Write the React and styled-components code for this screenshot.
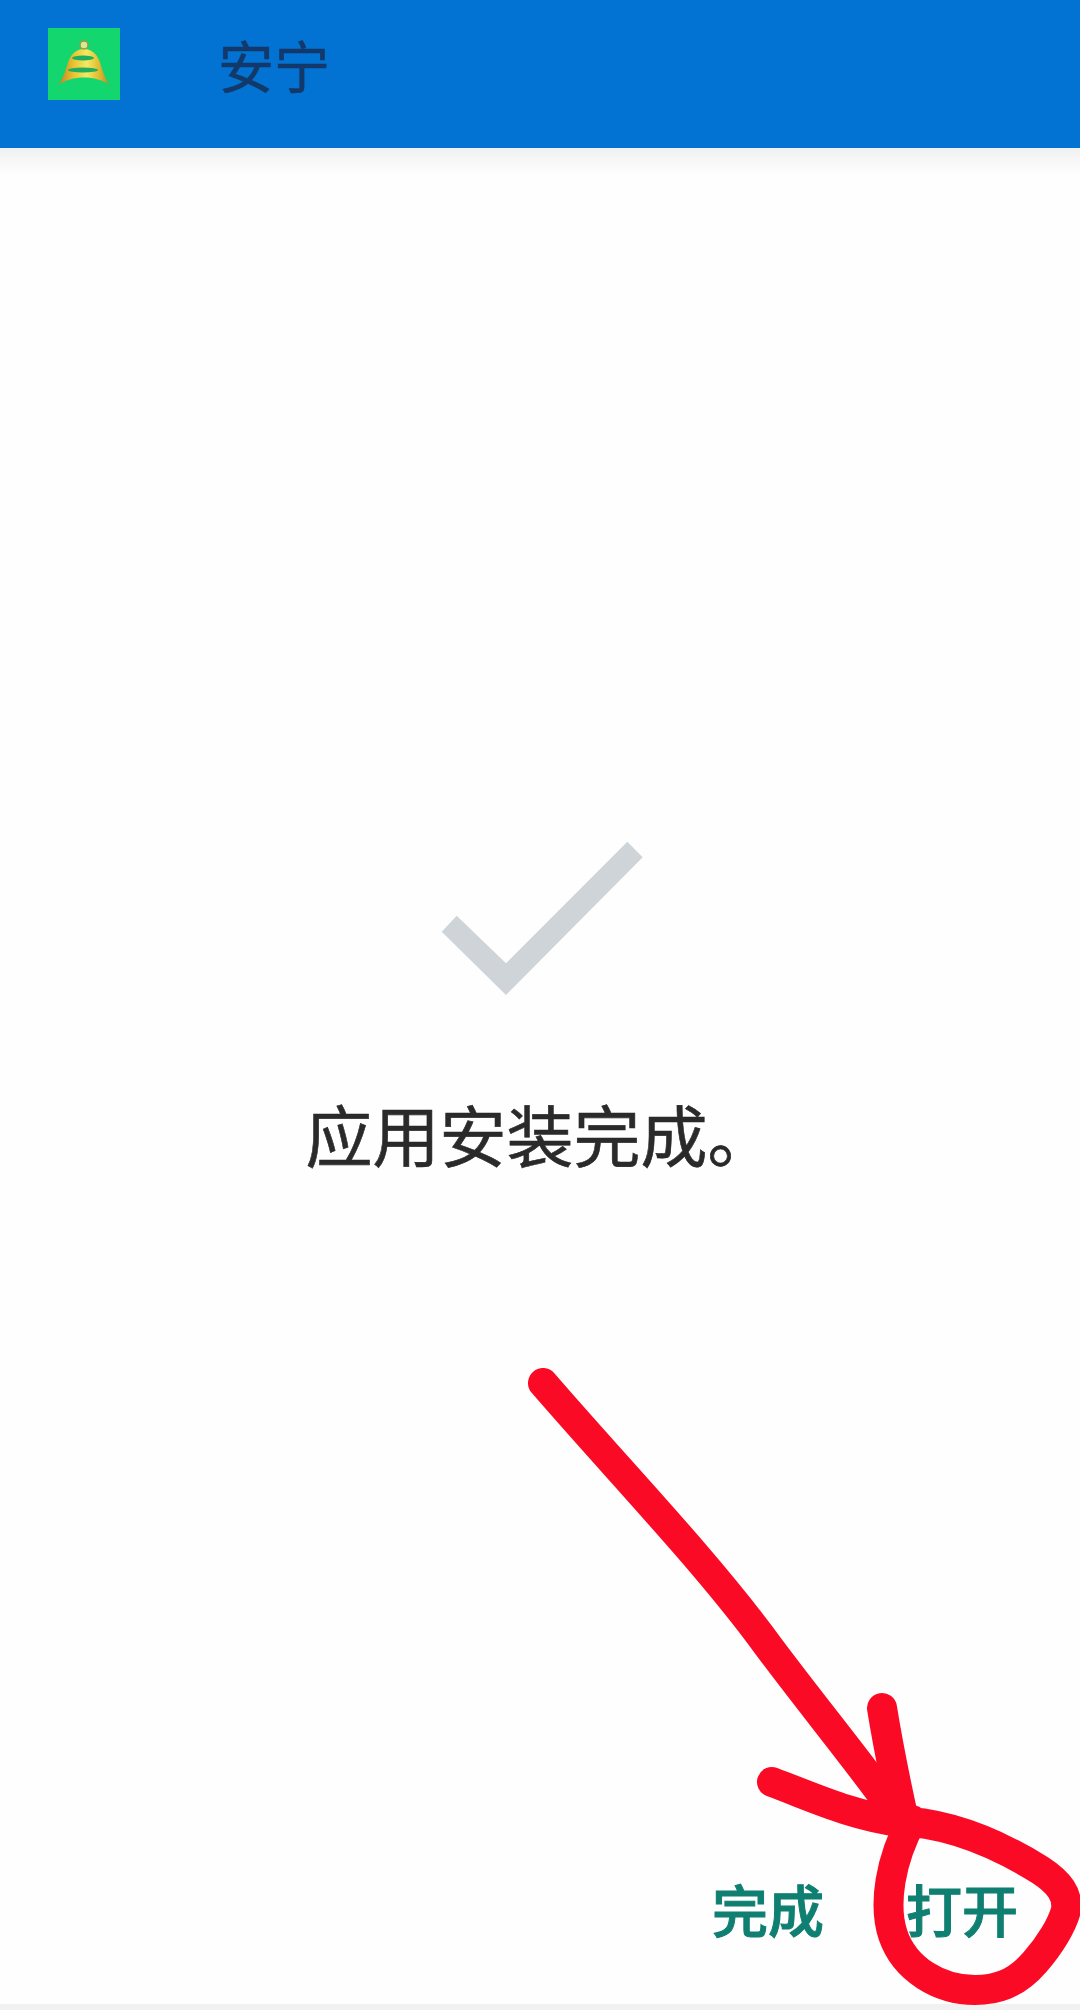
import styled, { createGlobalStyle } from "styled-components";

const GlobalStyle = createGlobalStyle`
  html, body {
    margin: 0;
    padding: 0;
    background: #fefefe;
  }
`;

const Page = styled.div`
  position: relative;
  width: 1080px;
  height: 2010px;
  display: flex;
  flex-direction: column;
  overflow: hidden;
  background: #fefefe;
  font-family: "Noto Sans CJK SC", "Noto Sans", sans-serif;
`;

const Header = styled.header`
  height: 148px;
  flex: none;
  display: flex;
  align-items: center;
  padding: 0 0 20px 48px;
  box-sizing: border-box;
  background: #0373d3;
`;

const Logo = styled.svg`
  width: 72px;
  height: 72px;
  flex: none;
`;

const Title = styled.h1`
  margin: 0 0 0 98px;
  font-size: 56px;
  font-weight: 400;
  line-height: 72px;
  color: #12396a;
  -webkit-text-stroke: 0.5px #12396a;
`;

const HeaderShadow = styled.div`
  height: 28px;
  flex: none;
  background: linear-gradient(to bottom, #eef0f1 0%, #f6f6f6 35%, #fefefe 100%);
`;

const Content = styled.main`
  flex: 1;
  display: flex;
  flex-direction: column;
  align-items: center;
  padding-top: 665px;
`;

const CheckIcon = styled.svg`
  width: 202px;
  height: 154px;
  margin-left: 4px;
  flex: none;
`;

const Message = styled.p`
  margin: 93px 0 0;
  font-size: 67px;
  line-height: 90px;
  font-weight: 400;
  color: #2a2a2a;
  -webkit-text-stroke: 0.6px #2a2a2a;
`;

const Actions = styled.div`
  flex: none;
  display: flex;
  justify-content: flex-end;
  gap: 82px;
  padding: 0 62px 60px 0;
`;

const ActionButton = styled.button`
  border: none;
  background: none;
  padding: 0;
  font-family: inherit;
  font-size: 56px;
  font-weight: 500;
  line-height: 72px;
  color: #0f7f71;
  -webkit-text-stroke: 1px #0f7f71;
`;

const BottomBar = styled.div`
  height: 6px;
  flex: none;
  background: #f1f1f1;
`;

const Scribble = styled.svg`
  position: absolute;
  left: 0;
  top: 0;
  width: 1080px;
  height: 2010px;
  pointer-events: none;
`;

// hand drawn marks: arrow shaft, two head strokes, loop round the button
const strokes = [
  "M543 1383 C620 1472 700 1555 760 1635 C800 1690 850 1750 892 1808",
  "M882 1708 C888 1745 895 1780 905 1825",
  "M772 1782 C815 1798 850 1815 900 1822",
  "M895 1821 C950 1822 1000 1845 1040 1870 C1060 1883 1068 1895 1066 1910 C1062 1925 1050 1945 1035 1962 C1015 1985 995 1990 975 1990 C940 1990 905 1970 893 1935 C883 1905 890 1860 912 1820",
];

export default function App() {
  return (
    <Page>
      <GlobalStyle />
      <Header>
        <Logo viewBox="0 0 72 72">
          <defs>
            <linearGradient id="gold" x1="0" x2="1" y1="0" y2="0">
              <stop offset="0" stopColor="#c07f1e" />
              <stop offset="0.3" stopColor="#e8c234" />
              <stop offset="0.55" stopColor="#f4ea62" />
              <stop offset="0.8" stopColor="#e0b830" />
              <stop offset="1" stopColor="#a8882a" />
            </linearGradient>
          </defs>
          <rect width="72" height="72" fill="#13d66e" />
          <path
            d="M10 57 C16 50 18 40 21 32 C24 25 29 21 36 21 C43 21 48 25 51 32 C54 40 56 50 62 57 C48 47 24 47 10 57 Z"
            fill="url(#gold)"
          />
          <ellipse cx="35" cy="30" rx="11" ry="2.4" fill="#1fae5e" />
          <ellipse cx="35" cy="42" rx="15" ry="2.6" fill="#1fae5e" />
          <circle cx="36" cy="17" r="4" fill="#d8e89a" stroke="#9c9a3a" strokeWidth="1.5" />
        </Logo>
        <Title>安宁</Title>
      </Header>
      <HeaderShadow />
      <Content>
        <CheckIcon viewBox="441 841 202 154">
          <polygon
            points="441.7,931.7 456.7,915.7 506,963.3 627.3,841.7 642.7,857.3 506,995"
            fill="#cfd4d8"
          />
        </CheckIcon>
        <Message>应用安装完成。</Message>
      </Content>
      <Actions>
        <ActionButton>完成</ActionButton>
        <ActionButton>打开</ActionButton>
      </Actions>
      <BottomBar />
      <Scribble viewBox="0 0 1080 2010">
        {strokes.map((d) => (
          <path
            key={d}
            d={d}
            fill="none"
            stroke="#fb0a26"
            strokeWidth="30"
            strokeLinecap="round"
            strokeLinejoin="round"
          />
        ))}
      </Scribble>
    </Page>
  );
}
